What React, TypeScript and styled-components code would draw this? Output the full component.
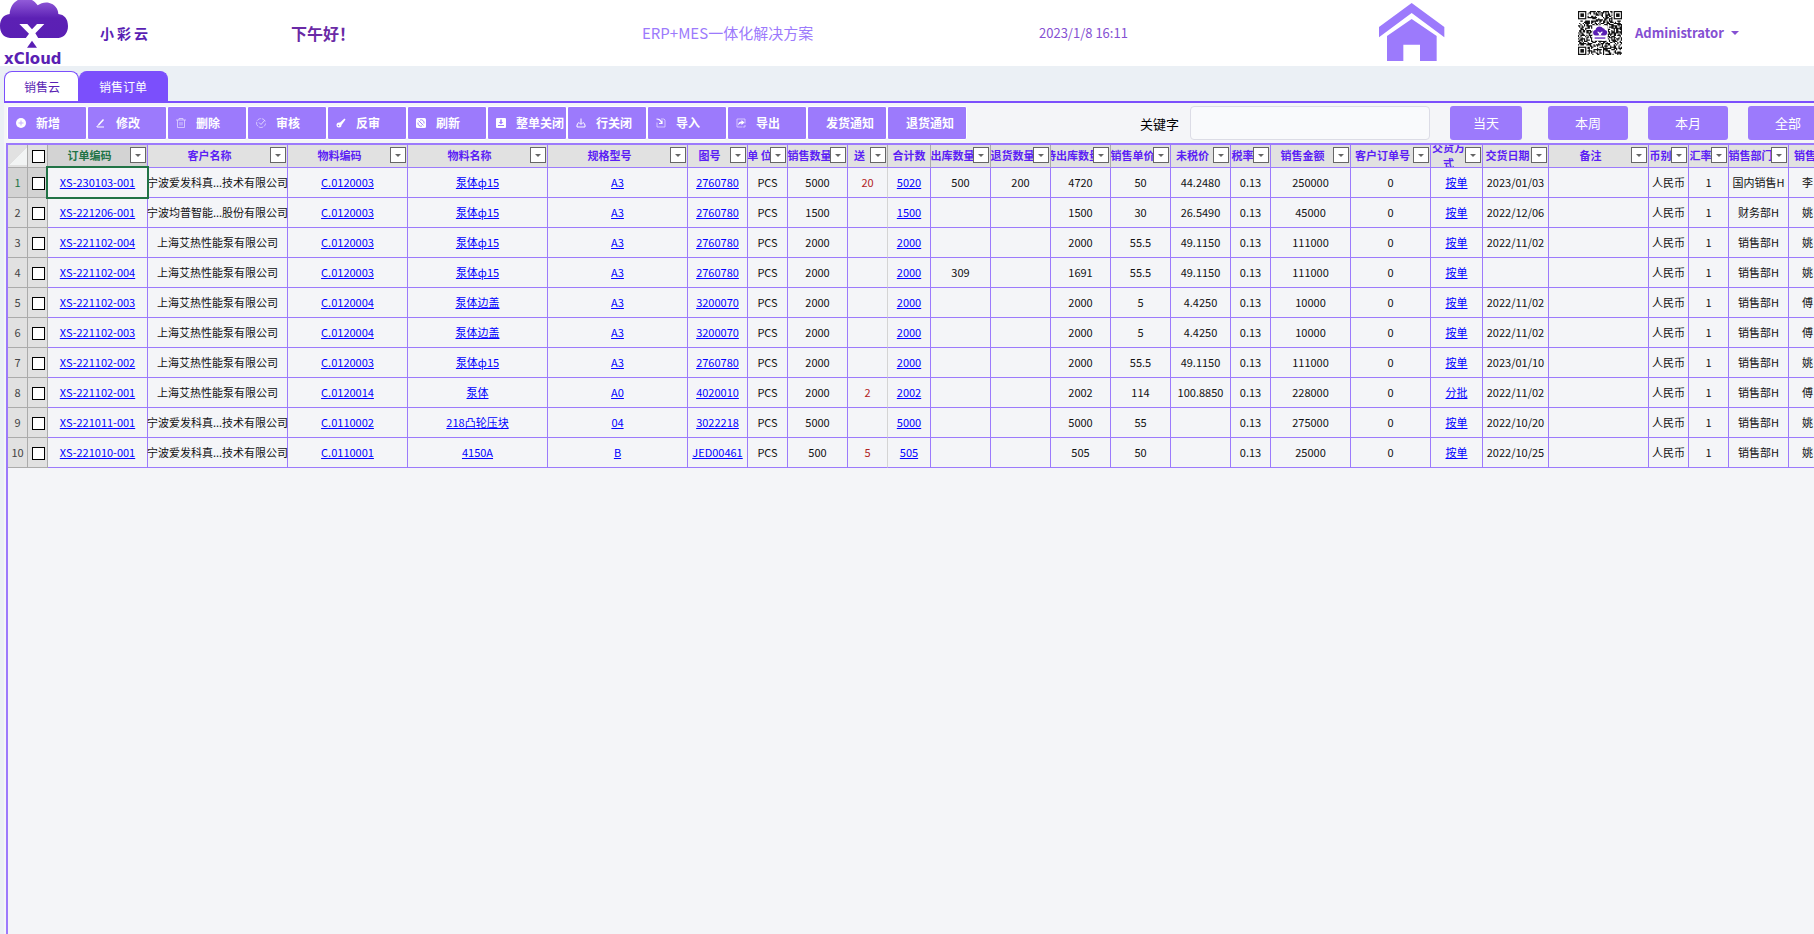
import React from 'react';
import styled, { createGlobalStyle, css } from 'styled-components';

const color = {
  purple: '#9c7afc',
  deep: '#7b4ffc',
  header: '#5b1ef5',
  ink: '#5a1fb4',
  page: '#ebf0f5',
  panel: '#f4f5f8',
  gray: '#ababab',
  green: '#217346',
};

const GlobalStyle = createGlobalStyle`
  *, *::before, *::after { box-sizing: border-box; }
  body {
    margin: 0;
    background: ${color.page};
    font-family: "Noto Sans CJK SC", "Noto Sans", sans-serif;
    font-size: 11px;
    color: #111;
    overflow: hidden;
  }
  button, input { font-family: inherit; }
`;

const Page = styled.div`
  display: flex;
  flex-direction: column;
  min-height: 100vh;
`;

/* ---------- top bar ---------- */

const TopBar = styled.header`
  display: grid;
  grid-template-columns: 100px 191fr 351fr 397fr 340fr 199fr 236fr;
  align-items: center;
  height: 66px;
  background: #fff;
  overflow: hidden;
`;

const Brand = styled.div`
  display: flex;
  flex-direction: column;
  align-items: flex-start;
  align-self: start;
  height: 66px;
  svg { flex: none; }
`;

const BrandWord = styled.span`
  padding-left: 4px;
  font: bold 15px/20px "DejaVu Sans", sans-serif;
  color: ${color.ink};
`;

const BrandName = styled.strong`
  display: flex;
  gap: 3px;
  font-size: 14px;
  line-height: 20px;
  color: ${color.ink};
`;

const Greeting = styled.strong`
  font-size: 16px;
  line-height: 24px;
  color: #6a2aa6;
`;

const Slogan = styled.span`
  font-size: 15px;
  line-height: 24px;
  color: ${color.purple};
`;

const Clock = styled.time`
  font-size: 13px;
  line-height: 24px;
  color: #8550d2;
`;

const HomeLink = styled.a`
  display: block;
  height: 60px;
`;

const Account = styled.div`
  display: flex;
  align-items: center;
  gap: 13px;
`;

const AccountButton = styled.button`
  display: flex;
  align-items: center;
  gap: 7px;
  padding: 0;
  border: 0;
  background: none;
  font-size: 13px;
  font-weight: bold;
  line-height: 24px;
  color: #8550d2;
`;

const Caret = styled.i`
  border: solid transparent;
  border-width: 4px 4px 0;
  border-top-color: currentColor;
`;

/* ---------- tabs ---------- */

const Tabs = styled.nav`
  display: flex;
  margin: 5px 0 0 4px;
  border-bottom: 2px solid ${color.deep};
`;

const Tab = styled.a<{ $active?: boolean }>`
  height: 30px;
  padding: 0 20px 0 19px;
  border: 1px solid ${color.deep};
  border-bottom: 0;
  border-radius: 8px 8px 0 0;
  font-size: 12px;
  line-height: 30px;
  text-decoration: none;
  background: #fff;
  color: ${color.ink};
  ${p => !p.$active && css`padding: 0 18px 0 19px;`}
  ${p => p.$active && css`
    background: ${color.deep};
    color: #fff;
  `}
`;

/* ---------- tool bar ---------- */

const Panel = styled.main`
  display: flex;
  flex: 1;
  flex-direction: column;
  min-width: 0;
  margin-left: 4px;
  background: ${color.panel};
`;

const ToolBar = styled.div`
  display: flex;
  align-items: center;
  padding: 3px 0 3px 3px;
  overflow: hidden;
`;

const Actions = styled.div`
  display: flex;
  flex: none;
  margin-right: 173px;
`;

const ActionButton = styled.button<{ $plain?: boolean }>`
  display: flex;
  align-items: center;
  gap: 10px;
  width: 80px;
  height: 34px;
  padding: 0 0 0 ${p => (p.$plain ? 18 : 8)}px;
  border: 1px solid #fff;
  border-radius: 2px;
  background: ${color.purple};
  color: #fff;
  font-size: 12px;
  font-weight: bold;
  line-height: 20px;
  white-space: nowrap;
  svg { flex: none; }
`;

const Search = styled.label`
  display: flex;
  flex: none;
  align-items: center;
  gap: 11px;
  font-size: 13px;
  color: #000;
`;

const SearchBox = styled.input`
  width: 240px;
  height: 34px;
  padding: 0 8px;
  border: 1px solid #dcdce6;
  border-radius: 4px;
  background: #f9fafc;
  font-size: 13px;
`;

const Ranges = styled.div`
  display: flex;
  flex: none;
  gap: 20px;
  margin-left: 20px;
`;

const RangeButton = styled.button<{ $first?: boolean }>`
  width: ${p => (p.$first ? 72 : 80)}px;
  height: 34px;
  margin-right: ${p => (p.$first ? 6 : 0)}px;
  padding: 0;
  border: 0;
  border-radius: 3px;
  background: ${color.purple};
  color: #fff;
  font-size: 13px;
  line-height: 34px;
`;

/* ---------- sheet ---------- */

const Sheet = styled.section`
  flex: 1;
  margin-left: 2px;
  border: solid ${color.purple};
  border-width: 2px 0 0 2px;
  overflow: hidden;
`;

const Grid = styled.table`
  width: 1840px;
  table-layout: fixed;
  border-collapse: separate;
  border-spacing: 0;
  th, td { padding: 0; }
`;

const Slot = styled.div<{ $h: number; $start?: number }>`
  display: flex;
  align-items: center;
  justify-content: center;
  height: ${p => p.$h}px;
  padding-bottom: 2px;
  white-space: nowrap;
  line-height: 16px;
  ${p => p.$start && css`
    justify-content: flex-start;
    padding-left: ${p.$start}px;
  `}
`;

const HeadCell = styled.th<{ $gray?: boolean; $selected?: boolean; $filter?: boolean; $wrap?: boolean }>`
  position: relative;
  border: solid ${color.purple};
  border-width: 0 1px 1px 0;
  background: ${p => (p.$selected ? '#d3d3d3' : '#e1e1e1')};
  color: ${p => (p.$selected ? color.green : color.header)};
  font-weight: bold;
  ${Slot} { overflow: hidden; }
  ${p => p.$gray && css`border-right-color: ${color.gray};`}
  ${p => p.$filter && css`${Slot} { margin-right: 16px; }`}
  ${p => p.$wrap && css`${Slot} { white-space: normal; text-align: center; }`}
`;

const SideCell = styled.th<{ $selected?: boolean }>`
  border: solid ${color.gray};
  border-width: 0 1px 1px 0;
  background: ${p => (p.$selected ? '#d3d3d3' : '#e1e1e1')};
  color: ${p => (p.$selected ? color.green : '#444')};
  font-weight: normal;
`;

const Cell = styled.td<{ $gray?: boolean; $red?: boolean; $selected?: boolean }>`
  border: solid ${color.purple};
  border-width: 0 1px 1px 0;
  color: ${p => (p.$red ? '#b22222' : '#111')};
  ${p => p.$gray && css`border-right-color: #d4d4d4;`}
  ${p => p.$selected && css`
    position: relative;
    &::after {
      content: '';
      position: absolute;
      inset: -2px;
      border: 2px solid ${color.green};
      pointer-events: none;
    }
  `}
  a { color: #00f; text-underline-offset: 1px; }
`;

const FilterButton = styled.button`
  position: absolute;
  top: 2px;
  right: 1px;
  display: flex;
  align-items: center;
  justify-content: center;
  width: 16px;
  height: 16px;
  padding: 0;
  border: 1px solid #666;
  background: #fff;
  color: #666;
  i { border-width: 3px 3px 0; }
`;

const Check = styled.input`
  appearance: none;
  flex: none;
  width: 13px;
  height: 13px;
  margin: 3px 0 0;
  border: 1px solid #000;
  background: #fff;
`;

const Corner = styled.div`
  height: 18px;
  margin: 0 0 0 2px;
  background: linear-gradient(135deg, transparent 50%, #f2f4f4 50%);
`;

/* ---------- drawings ---------- */

const Logo = () => (
  <svg width="68" height="49" viewBox="0 0 204 147" aria-hidden="true">
    <defs>
      <linearGradient id="cloud" x1="0" y1="0" x2="0" y2="1">
        <stop offset="0" stopColor="#9660dc" />
        <stop offset="0.5" stopColor="#5c20b4" />
        <stop offset="1" stopColor="#5a1fb4" />
      </linearGradient>
    </defs>
    <path
      fill="url(#cloud)"
      d="M30 114C10 112 0 98 0 78C0 58 10 44 29 42C30 18 46-5 75-5C92-5 104 3 113 16C122 9 134 6 146 8C164 12 175 26 175 42C193 44 204 56 204 78C204 98 193 112 176 114Z"
    />
    <path fill="#fff" d="M58 72H82L96 88L111 72H133L106 100L115 115H77L87 101Z" />
    <path fill="#5a1fb4" d="M96 122L111 143H81Z" />
  </svg>
);

const House = () => (
  <svg width="66" height="58" viewBox="0 0 198 174" fill={color.purple} aria-hidden="true">
    <path d="M98 0L196 72V103L98 30L0 103V72Z" />
    <path d="M98 48L173 99V174H123V125H73V174H24V99Z" />
  </svg>
);

const QR_SIZE = 37;

const qrModules = (() => {
  const cells: string[] = [];
  let seed = 977;
  const next = () => {
    seed = (seed * 1103515245 + 12345) % 2147483648;
    return seed / 2147483648;
  };
  const inFinder = (x: number, y: number) =>
    (x < 8 && y < 8) || (x >= QR_SIZE - 8 && y < 8) || (x < 8 && y >= QR_SIZE - 8);
  for (let y = 0; y < QR_SIZE; y++) {
    for (let x = 0; x < QR_SIZE; x++) {
      const dark = next() < 0.52;
      if (dark && !inFinder(x, y)) cells.push(`M${x} ${y}h1v1h-1z`);
    }
  }
  return cells.join('');
})();

const Finder = ({ x, y }: { x: number; y: number }) => (
  <>
    <rect x={x + 0.5} y={y + 0.5} width="6" height="6" fill="none" stroke="#111" />
    <rect x={x + 2} y={y + 2} width="3" height="3" />
  </>
);

const QrCode = () => (
  <svg width="44" height="44" viewBox="0 0 37 37" fill="#111" role="img" aria-label="QR">
    <path d={qrModules} />
    <Finder x={0} y={0} />
    <Finder x={30} y={0} />
    <Finder x={0} y={30} />
    <rect x="12" y="12" width="13" height="13" rx="1" fill="#fff" />
    <path
      fill="#5a1fb4"
      d="M15 20.500C13 20.500 12.700 19 12.700 18C12.700 17 13.500 16 14.700 16C15 14 16.500 13 18 13C19.500 13 20.500 13.800 21 14.500C22 14.500 22.500 15.200 22.600 16C24 16 24.500 17 24.500 18C24.500 19.500 23.500 20.500 22.500 20.500Z"
    />
    <path fill="#fff" d="M16 17.500h1.500l1 1l1-1h1.500l-1.800 2l.8 1h-3l.8-1z" />
    <path fill="#8a5cd0" d="M14 22h9v1.500h-9z" />
  </svg>
);

const icons: Record<string, React.ReactNode> = {
  plus: (
    <>
      <circle cx="10" cy="10" r="10" fill="#fff" />
      <path d="M10 5v10M5 10h10" stroke="#c5b1fd" strokeWidth="2" />
    </>
  ),
  pencil: (
    <g fill="none" stroke="#fff">
      <path d="M5 14L15 3" strokeWidth="3" />
      <path d="M1 18L6 13M2 18h14" strokeWidth="2" />
    </g>
  ),
  trash: (
    <g fill="none" stroke="#e2d8fe" strokeWidth="1.600">
      <path d="M0 4h20M6 4V1h8v3M3 4v15h14V4M8 8v7M12 8v7" />
    </g>
  ),
  check: (
    <g fill="none" stroke="#e2d8fe" strokeWidth="1.600">
      <path d="M18.500 7A9 9 0 1 0 19 11" strokeDasharray="9 2" />
      <path d="M6 9l4 4l8-9" strokeWidth="2" />
    </g>
  ),
  key: (
    <g fill="#fff">
      <circle cx="6" cy="14" r="5" />
      <path d="M7 10L17 1L19 3L11 14Z" />
      <circle cx="5" cy="15" r="1.500" fill={color.purple} />
    </g>
  ),
  refresh: (
    <>
      <rect width="20" height="20" rx="3" fill="#fff" />
      <g fill="none" stroke={color.purple} strokeWidth="1.800">
        <path d="M4 9a6 6 0 0 0 8 7M16 11a6 6 0 0 0-8-7M5 5l7 7M8 8l7 7" />
      </g>
    </>
  ),
  save: (
    <>
      <rect width="20" height="20" rx="2" fill="#fff" />
      <path d="M8.500 3h3v5h3L10 12.500L5.500 8h3zM4 14h12v2H4z" fill={color.purple} />
    </>
  ),
  tray: (
    <g fill="none" stroke="#fff" strokeWidth="2">
      <path d="M10 1v11M6 9l4 4l4-4M5 9l-3 5v4h16v-4l-3-5" />
    </g>
  ),
  importBox: (
    <g fill="none" stroke="#e2d8fe" strokeWidth="1.600">
      <path d="M10 2h6l2 2v14H2V9" />
      <path d="M1 2c5 0 9 3 10 8M12 5v6H6" stroke="#fff" strokeWidth="2.400" />
    </g>
  ),
  exportBox: (
    <>
      <path d="M13 18H2V2h16v9M14 18h4v-4" fill="none" stroke="#e2d8fe" strokeWidth="1.600" />
      <path d="M4 15c0-5 3-8 7-8V4l6 5l-6 5v-3c-3 0-5 1-7 4z" fill="#fff" />
    </>
  ),
};

const Icon = ({ name }: { name: string }) => (
  <svg width="10" height="10" viewBox="0 0 20 20" aria-hidden="true">
    {icons[name]}
  </svg>
);

/* ---------- data ---------- */

const actions: [string, string?][] = [
  ['新增', 'plus'],
  ['修改', 'pencil'],
  ['删除', 'trash'],
  ['审核', 'check'],
  ['反审', 'key'],
  ['刷新', 'refresh'],
  ['整单关闭', 'save'],
  ['行关闭', 'tray'],
  ['导入', 'importBox'],
  ['导出', 'exportBox'],
  ['发货通知'],
  ['退货通知'],
];

type Column = {
  title: string;
  width: number;
  link?: boolean;
  plain?: boolean;
  gray?: boolean;
  wrap?: boolean;
  start?: [number, number];
};

const columns: Column[] = [
  { title: '订单编码', width: 100, link: true },
  { title: '客户名称', width: 140 },
  { title: '物料编码', width: 120, link: true },
  { title: '物料名称', width: 140, link: true },
  { title: '规格型号', width: 140, link: true },
  { title: '图号', width: 60, link: true },
  { title: '单 位', width: 40 },
  { title: '销售数量', width: 60 },
  { title: '送', width: 40, gray: true },
  { title: '合计数', width: 43, link: true, plain: true, gray: true },
  { title: '出库数量', width: 60, gray: true },
  { title: '退货数量', width: 60, gray: true },
  { title: '待出库数量', width: 60, gray: true },
  { title: '销售单价', width: 60 },
  { title: '未税价', width: 60 },
  { title: '税率', width: 40 },
  { title: '销售金额', width: 80 },
  { title: '客户订单号', width: 80 },
  { title: '交货方式', width: 52, link: true, wrap: true },
  { title: '交货日期', width: 66 },
  { title: '备注', width: 100 },
  { title: '币别', width: 40 },
  { title: '汇率', width: 40 },
  { title: '销售部门', width: 60 },
  { title: '销售', width: 59, plain: true, start: [5, 13] },
];

const AIFA = '宁波爱发科真...技术有限公司';
const AIRE = '上海艾热性能泵有限公司';

const rows: string[][] = [
  ['XS-230103-001', AIFA, 'C.0120003', '泵体ф15', 'A3', '2760780', 'PCS', '5000', '20', '5020', '500', '200', '4720', '50', '44.2480', '0.13', '250000', '0', '按单', '2023/01/03', '', '人民币', '1', '国内销售H', '李'],
  ['XS-221206-001', '宁波均普智能...股份有限公司', 'C.0120003', '泵体ф15', 'A3', '2760780', 'PCS', '1500', '', '1500', '', '', '1500', '30', '26.5490', '0.13', '45000', '0', '按单', '2022/12/06', '', '人民币', '1', '财务部H', '姚'],
  ['XS-221102-004', AIRE, 'C.0120003', '泵体ф15', 'A3', '2760780', 'PCS', '2000', '', '2000', '', '', '2000', '55.5', '49.1150', '0.13', '111000', '0', '按单', '2022/11/02', '', '人民币', '1', '销售部H', '姚'],
  ['XS-221102-004', AIRE, 'C.0120003', '泵体ф15', 'A3', '2760780', 'PCS', '2000', '', '2000', '309', '', '1691', '55.5', '49.1150', '0.13', '111000', '0', '按单', '', '', '人民币', '1', '销售部H', '姚'],
  ['XS-221102-003', AIRE, 'C.0120004', '泵体边盖', 'A3', '3200070', 'PCS', '2000', '', '2000', '', '', '2000', '5', '4.4250', '0.13', '10000', '0', '按单', '2022/11/02', '', '人民币', '1', '销售部H', '傅'],
  ['XS-221102-003', AIRE, 'C.0120004', '泵体边盖', 'A3', '3200070', 'PCS', '2000', '', '2000', '', '', '2000', '5', '4.4250', '0.13', '10000', '0', '按单', '2022/11/02', '', '人民币', '1', '销售部H', '傅'],
  ['XS-221102-002', AIRE, 'C.0120003', '泵体ф15', 'A3', '2760780', 'PCS', '2000', '', '2000', '', '', '2000', '55.5', '49.1150', '0.13', '111000', '0', '按单', '2023/01/10', '', '人民币', '1', '销售部H', '姚'],
  ['XS-221102-001', AIRE, 'C.0120014', '泵体', 'A0', '4020010', 'PCS', '2000', '2', '2002', '', '', '2002', '114', '100.8850', '0.13', '228000', '0', '分批', '2022/11/02', '', '人民币', '1', '销售部H', '傅'],
  ['XS-221011-001', AIFA, 'C.0110002', '218凸轮压块', '04', '3022218', 'PCS', '5000', '', '5000', '', '', '5000', '55', '', '0.13', '275000', '0', '按单', '2022/10/20', '', '人民币', '1', '销售部H', '姚'],
  ['XS-221010-001', AIFA, 'C.0110001', '4150A', 'B', 'JED00461', 'PCS', '500', '5', '505', '', '', '505', '50', '', '0.13', '25000', '0', '按单', '2022/10/25', '', '人民币', '1', '销售部H', '姚'],
];

const GIFT_COLUMN = 8;

/* ---------- page ---------- */

const OrderGrid = () => (
  <Grid>
    <colgroup>
      <col style={{ width: 20 }} />
      <col style={{ width: 20 }} />
      {columns.map((c, i) => <col key={i} style={{ width: c.width }} />)}
    </colgroup>
    <thead>
      <tr>
        <SideCell><Corner /></SideCell>
        <SideCell>
          <Slot $h={22} $start={4}><Check type="checkbox" aria-label="全选" /></Slot>
        </SideCell>
        {columns.map((c, i) => (
          <HeadCell key={i} $selected={i === 0} $gray={c.gray} $filter={!c.plain} $wrap={c.wrap}>
            <Slot $h={22} $start={c.start?.[0]}>{c.title}</Slot>
            {!c.plain && <FilterButton aria-label={c.title}><Caret /></FilterButton>}
          </HeadCell>
        ))}
      </tr>
    </thead>
    <tbody>
      {rows.map((row, r) => (
        <tr key={r}>
          <SideCell $selected={r === 0}><Slot $h={29}>{r + 1}</Slot></SideCell>
          <SideCell $selected={r === 0}>
            <Slot $h={29} $start={4}><Check type="checkbox" aria-label={row[0]} /></Slot>
          </SideCell>
          {row.map((value, i) => (
            <Cell
              key={i}
              $selected={r === 0 && i === 0}
              $red={i === GIFT_COLUMN}
              $gray={i === GIFT_COLUMN}
            >
              <Slot $h={29} $start={columns[i].start?.[1]}>
                {columns[i].link ? <a href="#">{value}</a> : value}
              </Slot>
            </Cell>
          ))}
        </tr>
      ))}
    </tbody>
  </Grid>
);

export default function App() {
  return (
    <Page>
      <GlobalStyle />
      <TopBar>
        <Brand>
          <Logo />
          <BrandWord>xCloud</BrandWord>
        </Brand>
        <BrandName><span>小</span><span>彩</span><span>云</span></BrandName>
        <Greeting>下午好！</Greeting>
        <Slogan>ERP+MES一体化解决方案</Slogan>
        <Clock>2023/1/8 16:11</Clock>
        <HomeLink href="#" aria-label="首页"><House /></HomeLink>
        <Account>
          <QrCode />
          <AccountButton>Administrator<Caret /></AccountButton>
        </Account>
      </TopBar>
      <Tabs>
        <Tab href="#">销售云</Tab>
        <Tab href="#" $active>销售订单</Tab>
      </Tabs>
      <Panel>
        <ToolBar>
          <Actions>
            {actions.map(([label, icon]) => (
              <ActionButton key={label} $plain={!icon}>
                {icon && <Icon name={icon} />}
                {label}
              </ActionButton>
            ))}
          </Actions>
          <Search>
            关键字
            <SearchBox type="text" />
          </Search>
          <Ranges>
            <RangeButton $first>当天</RangeButton>
            <RangeButton>本周</RangeButton>
            <RangeButton>本月</RangeButton>
            <RangeButton>全部</RangeButton>
          </Ranges>
        </ToolBar>
        <Sheet>
          <OrderGrid />
        </Sheet>
      </Panel>
    </Page>
  );
}
